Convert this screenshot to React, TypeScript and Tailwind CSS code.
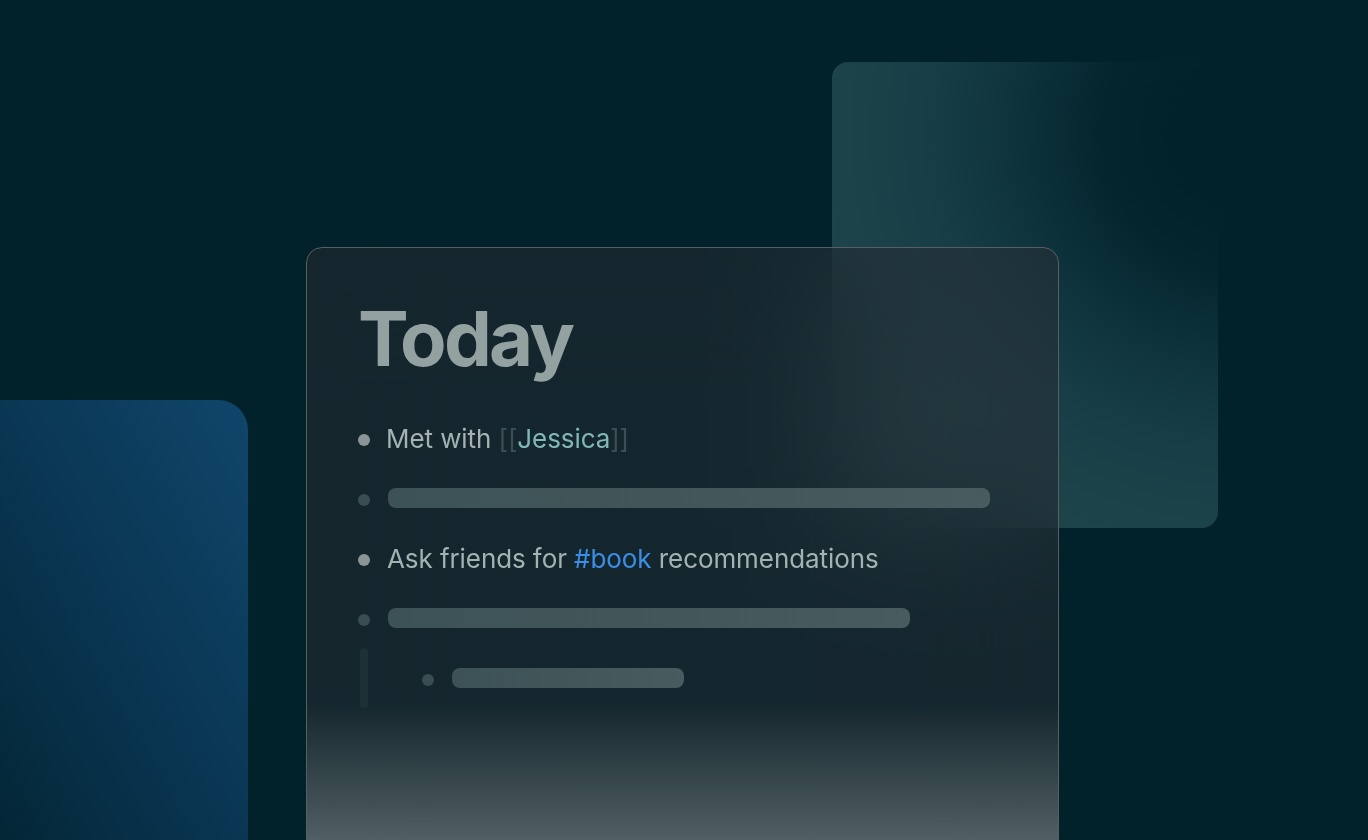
import React from "react";

function Bullet({ dim }: { dim?: boolean }) {
  return (
    <span
      className={`block w-3 h-3 mt-[3px] shrink-0 rounded-full ${
        dim ? "bg-[#3a4d52]" : "bg-[#8b9597]"
      }`}
    />
  );
}

function Bar({ width }: { width: number }) {
  return (
    <div
      className="h-5 rounded-[8px] bg-gradient-to-r from-[#3d5256] to-[#485b5f]"
      style={{ width }}
    />
  );
}

export default function App() {
  return (
    <div className="relative h-[840px] w-full overflow-hidden bg-[#01222b] font-[Inter,sans-serif]">
      {/* background shapes */}
      <div className="absolute left-[-40px] top-[400px] w-[288px] h-[500px] rounded-[30px] bg-gradient-to-tr from-[#03222e] via-[#093450] to-[#10466b]" />
      <div className="absolute left-[832px] top-[62px] w-[386px] h-[466px] rounded-2xl bg-[radial-gradient(circle_at_410px_70px,#01222b_0px,#01222b_70px,#04252e_140px,#0d323c_220px,#173d46_310px,#1c424a_400px,#20464d_500px)]" />

      <div className="relative z-10 pl-[306px] pt-[247px]">
        <div className="w-[753px] h-[610px] rounded-2xl border border-[#5a5e60] backdrop-blur-3xl bg-[linear-gradient(to_bottom,transparent_455px,rgba(97,112,115,0.78)_593px),linear-gradient(rgba(43,44,49,0.48),rgba(43,44,49,0.48))] pl-[51px] pt-[52px]">
          <h1 className="text-[76px] leading-none font-bold tracking-[-0.036em] text-[#94a1a1] mb-[32px]">
            Today
          </h1>

          <div className="flex flex-col text-[26px] tracking-[-0.08px] text-[#a4b2b2]">
            <div className="h-[60px] flex items-center gap-[16px]">
              <Bullet />
              <span>
                Met with <span className="text-[#3b5054]">[[</span>
                <span className="text-[#80b8b8]">Jessica</span>
                <span className="text-[#3b5054]">]]</span>
              </span>
            </div>
            <div className="h-[60px] flex items-center gap-[18px]">
              <Bullet dim />
              <Bar width={602} />
            </div>
            <div className="h-[60px] flex items-center gap-[17px]">
              <Bullet />
              <span>
                Ask friends for <span className="text-[#3b8ee6]">#book</span>{" "}
                recommendations
              </span>
            </div>
            <div className="h-[60px] flex items-center gap-[18px]">
              <Bullet dim />
              <Bar width={522} />
            </div>
            <div className="h-[60px] flex items-center">
              <span className="block ml-[2px] w-2 h-[60px] rounded-full bg-[#1d3036]" />
              <div className="ml-[54px] flex items-center gap-[18px]">
                <Bullet dim />
                <Bar width={232} />
              </div>
            </div>
          </div>
        </div>
      </div>
    </div>
  );
}
